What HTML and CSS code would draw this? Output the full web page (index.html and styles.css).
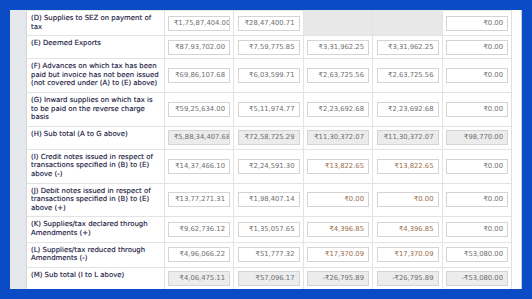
FILE: index.html
```html
<!DOCTYPE html>
<html>
<head>
<meta charset="utf-8">
<link rel="stylesheet" href="styles.css">
</head>
<body>
<div class="frame">
  <div class="panel">
    <div class="strip"></div>
    <div class="content">
      <div class="tbl">
        <div class="row">
          <div class="lbl">(D) Supplies to SEZ on payment of tax</div>
          <div class="cell"><div class="amt">₹1,75,87,404.00</div></div>
          <div class="cell"><div class="amt">₹28,47,400.71</div></div>
          <div class="cell shaded"></div>
          <div class="cell shaded"></div>
          <div class="cell"><div class="amt">₹0.00</div></div>
        </div>
        <div class="row">
          <div class="lbl">(E) Deemed Exports</div>
          <div class="cell"><div class="amt">₹87,93,702.00</div></div>
          <div class="cell"><div class="amt">₹7,59,775.85</div></div>
          <div class="cell"><div class="amt">₹3,31,962.25</div></div>
          <div class="cell"><div class="amt">₹3,31,962.25</div></div>
          <div class="cell"><div class="amt">₹0.00</div></div>
        </div>
        <div class="row">
          <div class="lbl">(F) Advances on which tax has been paid but invoice has not been issued (not covered under (A) to (E) above)</div>
          <div class="cell"><div class="amt">₹69,86,107.68</div></div>
          <div class="cell"><div class="amt">₹6,03,599.71</div></div>
          <div class="cell"><div class="amt">₹2,63,725.56</div></div>
          <div class="cell"><div class="amt">₹2,63,725.56</div></div>
          <div class="cell"><div class="amt">₹0.00</div></div>
        </div>
        <div class="row">
          <div class="lbl">(G) Inward supplies on which tax is to be paid on the reverse charge basis</div>
          <div class="cell"><div class="amt">₹59,25,634.00</div></div>
          <div class="cell"><div class="amt">₹5,11,974.77</div></div>
          <div class="cell"><div class="amt">₹2,23,692.68</div></div>
          <div class="cell"><div class="amt">₹2,23,692.68</div></div>
          <div class="cell"><div class="amt">₹0.00</div></div>
        </div>
        <div class="row">
          <div class="lbl">(H) Sub total (A to G above)</div>
          <div class="cell"><div class="amt total">₹5,88,34,407.68</div></div>
          <div class="cell"><div class="amt total">₹72,58,725.29</div></div>
          <div class="cell"><div class="amt total">₹11,30,372.07</div></div>
          <div class="cell"><div class="amt total">₹11,30,372.07</div></div>
          <div class="cell"><div class="amt total">₹98,770.00</div></div>
        </div>
        <div class="row">
          <div class="lbl">(I) Credit notes issued in respect of transactions specified in (B) to (E) above (-)</div>
          <div class="cell"><div class="amt">₹14,37,466.10</div></div>
          <div class="cell"><div class="amt">₹2,24,591.30</div></div>
          <div class="cell"><div class="amt warn">₹13,822.65</div></div>
          <div class="cell"><div class="amt warn">₹13,822.65</div></div>
          <div class="cell"><div class="amt">₹0.00</div></div>
        </div>
        <div class="row">
          <div class="lbl">(J) Debit notes issued in respect of transactions specified in (B) to (E) above (+)</div>
          <div class="cell"><div class="amt">₹13,77,271.31</div></div>
          <div class="cell"><div class="amt">₹1,98,407.14</div></div>
          <div class="cell"><div class="amt warn">₹0.00</div></div>
          <div class="cell"><div class="amt warn">₹0.00</div></div>
          <div class="cell"><div class="amt">₹0.00</div></div>
        </div>
        <div class="row">
          <div class="lbl">(K) Supplies/tax declared through Amendments (+)</div>
          <div class="cell"><div class="amt">₹9,62,736.12</div></div>
          <div class="cell"><div class="amt">₹1,35,057.65</div></div>
          <div class="cell"><div class="amt warn">₹4,396.85</div></div>
          <div class="cell"><div class="amt warn">₹4,396.85</div></div>
          <div class="cell"><div class="amt">₹0.00</div></div>
        </div>
        <div class="row">
          <div class="lbl">(L) Supplies/tax reduced through Amendments (-)</div>
          <div class="cell"><div class="amt">₹4,96,066.22</div></div>
          <div class="cell"><div class="amt">₹51,777.32</div></div>
          <div class="cell"><div class="amt warn">₹17,370.09</div></div>
          <div class="cell"><div class="amt warn">₹17,370.09</div></div>
          <div class="cell"><div class="amt">₹53,080.00</div></div>
        </div>
        <div class="row">
          <div class="lbl">(M) Sub total (I to L above)</div>
          <div class="cell"><div class="amt total">₹4,06,475.11</div></div>
          <div class="cell"><div class="amt total">₹57,096.17</div></div>
          <div class="cell"><div class="amt total">-₹26,795.89</div></div>
          <div class="cell"><div class="amt total">-₹26,795.89</div></div>
          <div class="cell"><div class="amt total">-₹53,080.00</div></div>
        </div>
      </div>
    </div>
  </div>
</div>
</body>
</html>
```
FILE: styles.css
```css
html, body {
  margin: 0;
  padding: 0;
}
body {
  background: #0a4cc6;
  width: 532px;
  height: 299px;
  overflow: hidden;
  font-family: "DejaVu Sans", Verdana, sans-serif;
}
.frame {
  padding: 10px 10px 0 10px;
}
.panel {
  height: 279px;
  display: flex;
  background: #ffffff;
  border-right: 1px solid #c9ccd1;
  box-sizing: border-box;
  overflow: hidden;
}
.strip {
  width: 16px;
  flex: none;
  background: #e4e7eb;
}
.content {
  flex: 1;
}
.tbl {
  width: 486px;
  border-left: 1px solid #d6d6d6;
  border-right: 1px solid #e0e0e0;
  border-top: 1px solid #e6e6e6;
  box-sizing: border-box;
}
.row {
  display: grid;
  grid-template-columns: 137px 69px 70px 69px 70px 69px;
  border-bottom: 1px solid #e3e3e3;
  min-height: 23px;
  box-sizing: border-box;
}
.lbl {
  padding: 3px 4px 4px 4px;
  font-size: 6.95px;
  line-height: 8.6px;
  color: #1c2242;
  -webkit-text-stroke: 0.15px #1c2242;
}
.cell {
  border-left: 1px solid #e3e3e3;
  display: flex;
  align-items: center;
  justify-content: center;
  padding: 0 3px;
}
.cell.shaded {
  background: #e8e8e8;
}
.amt {
  width: 62px;
  height: 15px;
  box-sizing: border-box;
  border: 1px solid #d4d4d4;
  background: #ffffff;
  font-size: 6.8px;
  line-height: 13px;
  color: #707070;
  text-align: right;
  padding: 0 4px 0 5px;
  white-space: nowrap;
  overflow: hidden;
}
.amt.total {
  background: #ececec;
}
.amt.warn {
  color: #9c6e4e;
}
```
